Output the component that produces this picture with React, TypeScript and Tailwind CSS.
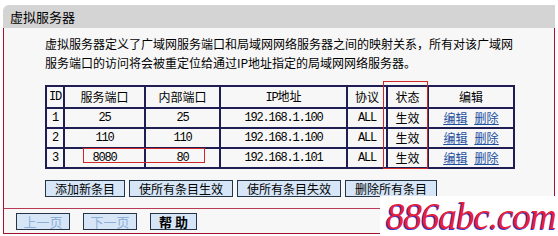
import React from "react";

const rows = [
    { id: "1", ext: "25", inner: "25", ip: "192.168.1.100", proto: "ALL", state: "生效" },
    { id: "2", ext: "110", inner: "110", ip: "192.168.1.100", proto: "ALL", state: "生效" },
    { id: "3", ext: "8080", inner: "80", ip: "192.168.1.101", proto: "ALL", state: "生效" },
];

const cjk = "font-['Noto_Sans_CJK_SC','Noto_Sans',sans-serif]";
const mono = "font-['Liberation_Mono','Noto_Sans_CJK_SC',monospace] text-[12px] tracking-[-1.2px]";
const cell = "border-2 border-[#1e1e52] h-[20px] p-0 text-center align-middle";

export default function App() {
    return (
        <div className={`relative w-[558px] h-[236px] bg-white overflow-hidden text-black ${cjk}`}>
            <div className="ml-[3px] pt-[5px] w-[552px]">
                <div className="h-[23px] bg-[#d4d4d4] rounded-tl-[6px] pl-[7px] flex items-center text-[13px]">
                    虚拟服务器
                </div>

                <div className="border-x border-[#a5122e] bg-[#f7f7f7] pl-[41px] pt-[6px] pb-[11px]">
                    <p className="w-[470px] text-[12px] leading-[19px]">
                        虚拟服务器定义了广域网服务端口和局域网网络服务器之间的映射关系，所有对该广域网服务端口的访问将会被重定位给通过IP地址指定的局域网网络服务器。
                    </p>

                    <div className="relative mt-[13px] w-[468px]">
                        <table className="w-[468px] table-fixed border-collapse text-[12px]">
                            <colgroup>
                                <col className="w-[18px]" />
                                <col className="w-[81px]" />
                                <col className="w-[75px]" />
                                <col className="w-[127px]" />
                                <col className="w-[40px]" />
                                <col className="w-[41px]" />
                                <col className="w-[86px]" />
                            </colgroup>
                            <thead>
                                <tr>
                                    <th className={`${cell} ${mono} font-normal`}>ID</th>
                                    <th className={`${cell} font-normal`}>服务端口</th>
                                    <th className={`${cell} font-normal`}>内部端口</th>
                                    <th className={`${cell} font-normal`}>
                                        <span className={mono}>IP</span>地址
                                    </th>
                                    <th className={`${cell} font-normal`}>协议</th>
                                    <th className={`${cell} font-normal`}>状态</th>
                                    <th className={`${cell} font-normal`}>编辑</th>
                                </tr>
                            </thead>
                            <tbody>
                                {rows.map((r) => (
                                    <tr key={r.id}>
                                        <td className={`${cell} ${mono}`}>{r.id}</td>
                                        <td className={`${cell} ${mono}`}>{r.ext}</td>
                                        <td className={`${cell} ${mono}`}>{r.inner}</td>
                                        <td className={`${cell} ${mono}`}>{r.ip}</td>
                                        <td className={`${cell} ${mono}`}>{r.proto}</td>
                                        <td className={cell}>{r.state}</td>
                                        <td className={cell}>
                                            <span className="flex justify-center gap-[7px] text-[#1d4fa0] underline">
                                                <a href="#">编辑</a>
                                                <a href="#">删除</a>
                                            </span>
                                        </td>
                                    </tr>
                                ))}
                            </tbody>
                        </table>
                        {/* highlight marks */}
                        <div className="absolute left-[338px] top-[-4px] w-[45px] h-[88px] border border-[#d02828]" />
                        <div className="absolute left-[38px] top-[63px] w-[122px] h-[15px] border border-[#d02828]" />
                    </div>

                    <div className="mt-[11px] flex gap-[4px] text-[12px]">
                        {["添加新条目", "使所有条目生效", "使所有条目失效", "删除所有条目"].map((t) => (
                            <button key={t} className="h-[17px] px-[9px] leading-[15px] bg-[#d6e6f7] border border-[#253447]">
                                {t}
                            </button>
                        ))}
                    </div>
                </div>

                <div className="border border-t-[#b93a55] border-x-[#a5122e] border-b-[#a5122e] bg-[#f7f7f7] pl-[12px] pt-[4px] pb-[3px] flex gap-[13px] text-[13px]">
                    <button className="h-[17px] w-[54px] leading-[15px] bg-[#d6e6f7] border border-[#253447] text-[#8fb0d6]">上一页</button>
                    <button className="h-[17px] w-[54px] leading-[15px] bg-[#d6e6f7] border border-[#253447] text-[#8fb0d6]">下一页</button>
                    <button className="h-[17px] w-[47px] leading-[15px] bg-[#d6e6f7] border border-[#253447] font-bold">帮 助</button>
                </div>
            </div>

            {/* watermark */}
            <div className="absolute left-[380px] top-[196px] w-[178px] h-[40px] bg-white flex items-end pl-[6px]">
                <span className="font-['Liberation_Serif',serif] italic text-[37px] leading-[39px] tracking-[-1px] text-[#e8203c] [text-shadow:-1px_1px_0_#3434c8]">
                    886abc.com
                </span>
            </div>
        </div>
    );
}
